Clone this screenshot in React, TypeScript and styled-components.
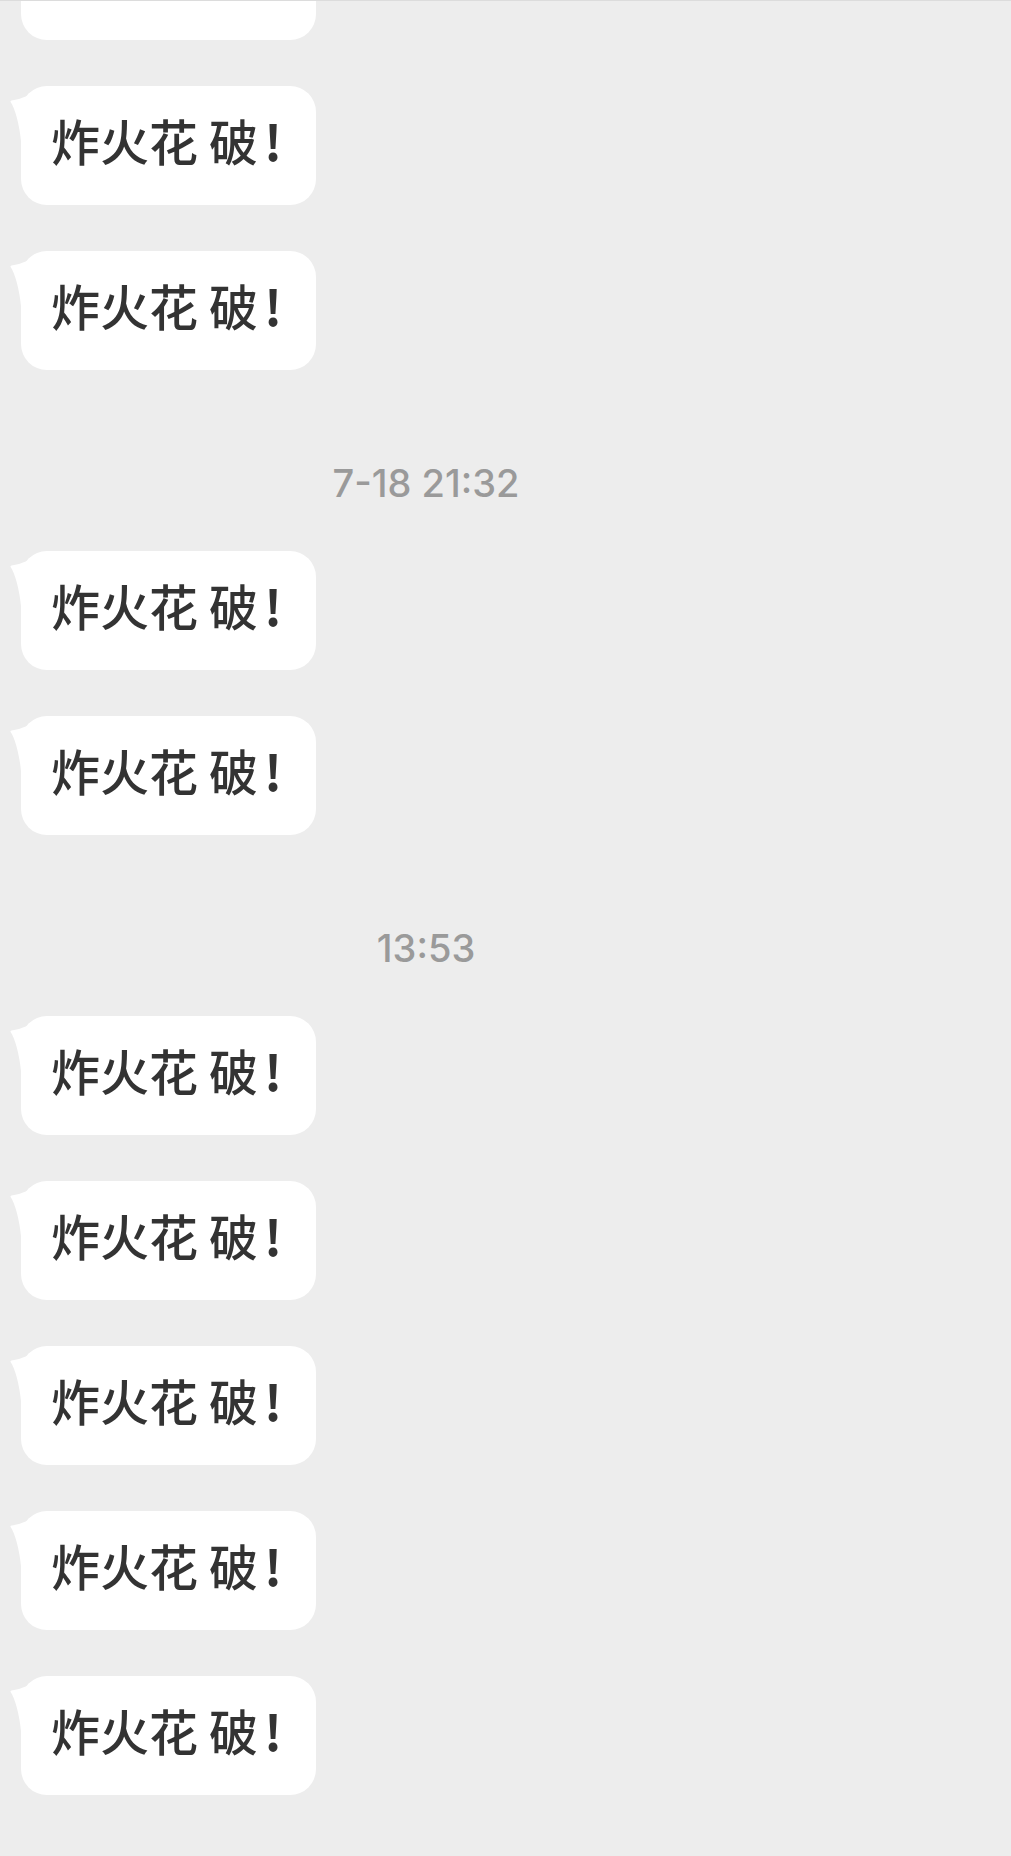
import React from "react";
import styled, { createGlobalStyle } from "styled-components";

const GlobalStyle = createGlobalStyle`
  html, body {
    margin: 0;
    padding: 0;
    background: #ededed;
  }
  body {
    font-family: "Noto Sans CJK SC", "Noto Sans", sans-serif;
  }
`;

const Screen = styled.div`
  width: 1011px;
  height: 1856px;
  overflow: hidden;
  background: #ededed;
  border-top: 1px solid #dcdcdc;
  box-sizing: border-box;
`;

const Feed = styled.div`
  width: 852px;
  display: flex;
  flex-direction: column;
  gap: 46px;
  margin-top: -80px;
  padding-left: 21px;
  box-sizing: border-box;
`;

const Row = styled.div`
  display: flex;
  justify-content: flex-start;
`;

const Bubble = styled.div`
  position: relative;
  height: 119px;
  box-sizing: border-box;
  display: flex;
  align-items: center;
  padding: 0 34px 12px 30px;
  background: #ffffff;
  border-radius: 26px;
  color: #333333;
  font-family: "Noto Sans CJK SC", "Noto Sans", sans-serif;
  font-size: 49px;
  font-weight: 500;
  line-height: 1;
  white-space: pre;
`;

const Bang = styled.span`
  padding-left: 6px;
  font-weight: 700;
`;

const Tail = styled.svg`
  position: absolute;
  left: -11px;
  top: 9px;
  width: 17px;
  height: 46px;
  overflow: visible;
`;

const Stamp = styled.div`
  padding-top: 45px;
  padding-right: 21px;
  text-align: center;
  font-family: Inter, "Liberation Sans", Arial, sans-serif;
  font-size: 38px;
  font-weight: 500;
  line-height: 44px;
  color: #9a9a9a;
`;

type Item =
  | { kind: "msg"; text: string; mark: string }
  | { kind: "time"; text: string };

const msg = (): Item => ({ kind: "msg", text: "炸火花 破", mark: "!" });

const items: Item[] = [
  msg(),
  msg(),
  msg(),
  { kind: "time", text: "7-18 21:32" },
  msg(),
  msg(),
  { kind: "time", text: "13:53" },
  msg(),
  msg(),
  msg(),
  msg(),
  msg(),
];

const Message: React.FC<{ text: string; mark: string }> = ({ text, mark }) => (
  <Row>
    <Bubble>
      <Tail viewBox="0 0 17 46" aria-hidden="true">
        <path
          d="M0.6 7 Q0 5.8 1.6 5.6 Q9 4.6 17 1 L17 46 L11 46 C9.5 30 5 13 0.6 7 Z"
          fill="#ffffff"
        />
      </Tail>
      {text}
      <Bang>{mark}</Bang>
    </Bubble>
  </Row>
);

export default function App() {
  return (
    <>
      <GlobalStyle />
      <Screen>
        <Feed>
          {items.map((it, i) =>
            it.kind === "msg" ? (
              <Message key={i} text={it.text} mark={it.mark} />
            ) : (
              <Stamp key={i}>{it.text}</Stamp>
            )
          )}
        </Feed>
      </Screen>
    </>
  );
}
